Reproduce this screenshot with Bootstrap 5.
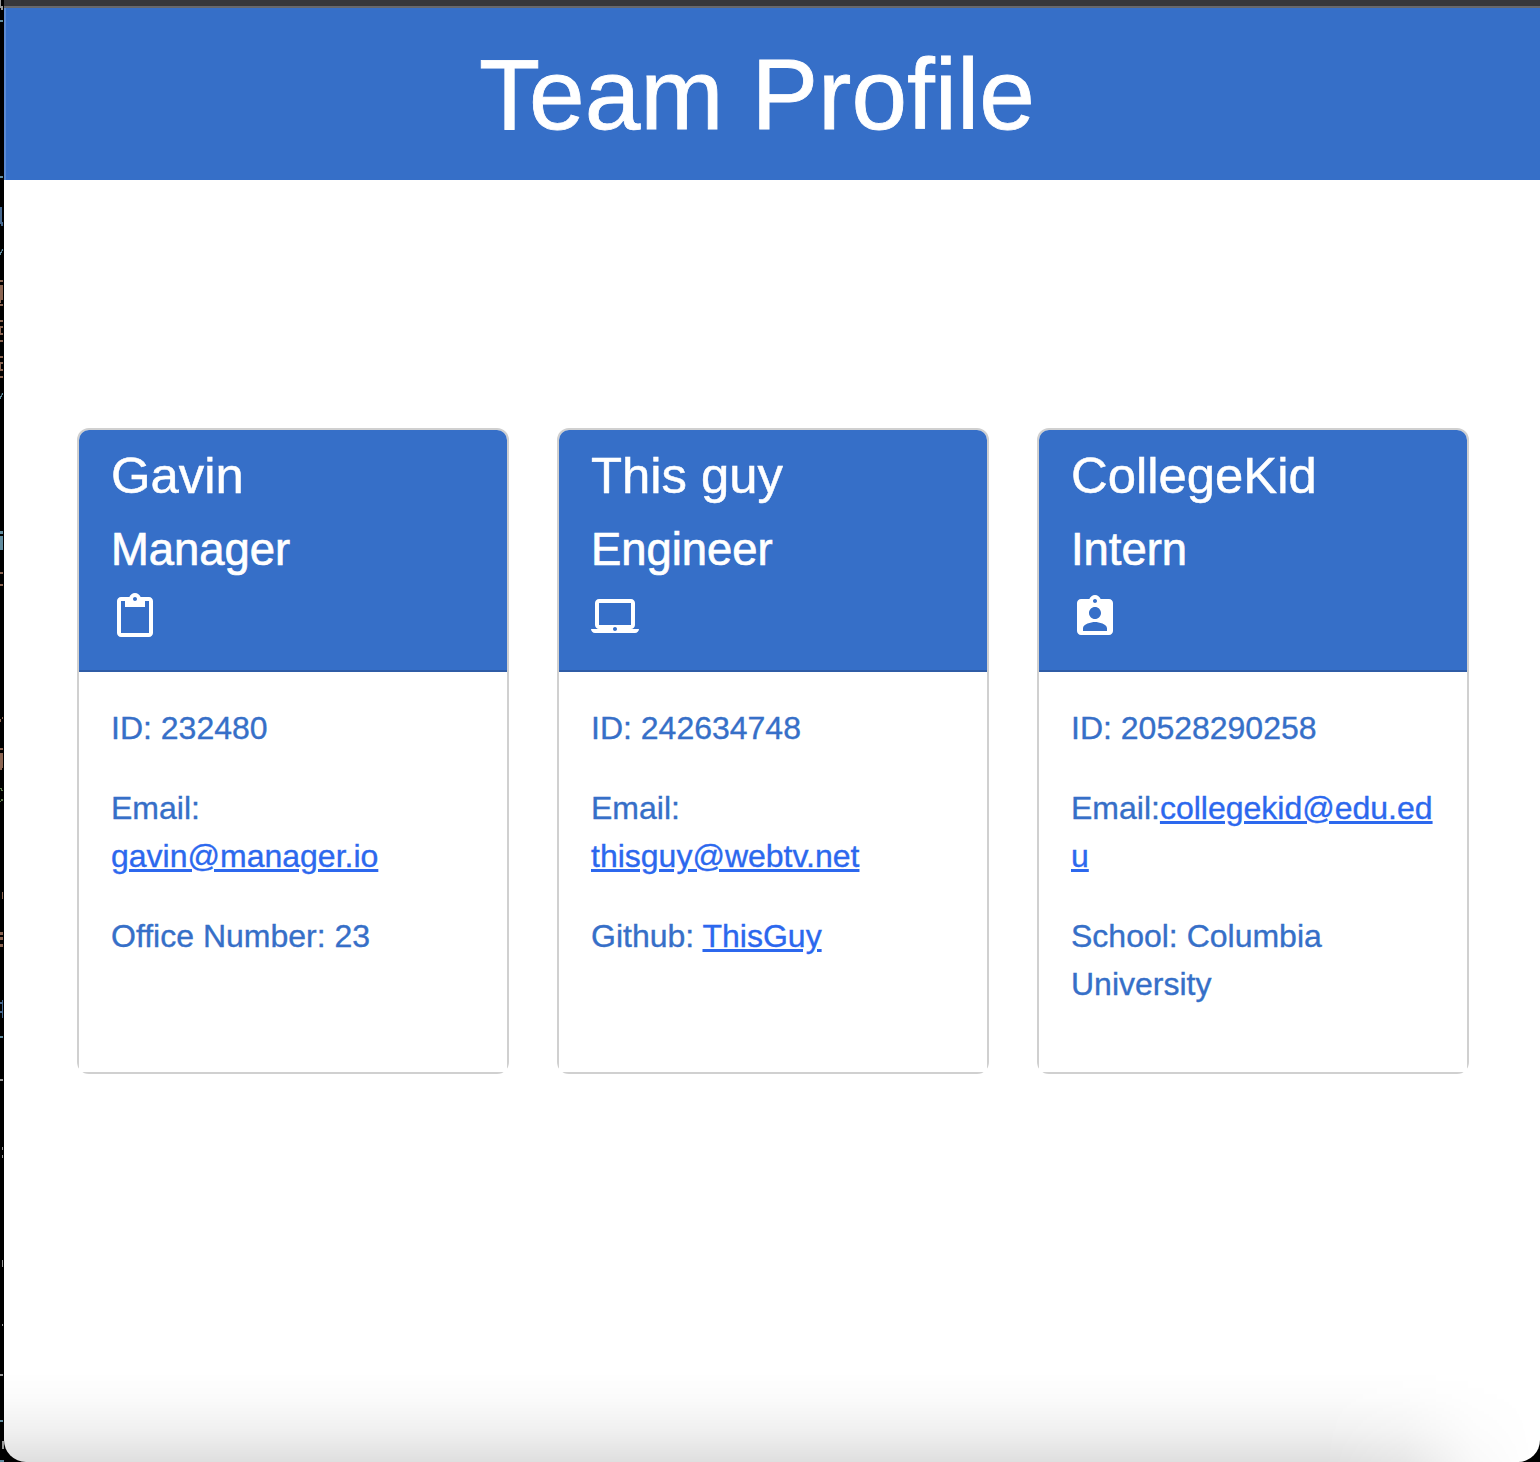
<!DOCTYPE html>
<html lang="en">
<head>
<meta charset="utf-8">
<meta name="viewport" content="width=device-width, initial-scale=1">
<title>Team Profile</title>
<link href="https://cdn.jsdelivr.net/npm/bootstrap@5.3.0/dist/css/bootstrap.min.css" rel="stylesheet">
<style>
  :root { --brand: #366fc8; }
  body { font-family: "Liberation Sans", Arial, sans-serif; font-size: 32px; background: #000; height: 1462px; overflow: hidden; -webkit-text-stroke: .35px currentColor; }
  .desktop { height: 1462px; }
  .editor-sliver { width: 4px; height: 1462px; flex: none; }
  .browser { border-radius: 0 0 22px 22px; overflow: hidden; background: #fff; }
  .toolbar-edge { height: 8px; background: #37373a; border-bottom: 2px solid #68686b; flex: none; }
  .hero { height: 172px; background: var(--brand); border-left: 2px solid #5b8ad3; color: #fff; padding-right: 32px; flex: none; }
  .hero h1 { font-size: 100px; line-height: 120px; margin: 0; padding-top: 26px; -webkit-text-stroke-width: .8px; }
  .team { padding: 248px 71px 0 73px; gap: 48px; }
  .profile { width: 432px; height: 646px; flex: none; border: 2px solid #d0d0d0; border-radius: 12px; color: var(--brand); }
  .profile .card-header { height: 242px; padding: 15px 32px 16px; background: var(--brand); color: #fff; border-bottom: 2px solid #2f5ca6; border-radius: 10px 10px 0 0; }
  .profile h2 { font-size: 50.8px; line-height: 61px; margin: 0 0 17px; -webkit-text-stroke-width: .5px; }
  .profile h3 { font-size: 45.4px; line-height: 54px; margin: 0 0 16px; -webkit-text-stroke-width: .7px; }
  .profile svg { width: 48px; height: 48px; fill: currentColor; display: block; }
  .profile .card-body { padding: 32px; background: #fff; }
  .profile p { line-height: 48px; margin-bottom: 32px; }
  .profile a { color: #2c68ee; }
  .dock-shade { height: 90px; background: linear-gradient(to bottom, rgba(0,0,0,0), rgba(0,0,0,.015) 28%, rgba(0,0,0,.06) 65%, rgba(0,0,0,.125)); -webkit-mask-image: linear-gradient(to right, #000 1320px, rgba(0,0,0,.75) 1400px, rgba(0,0,0,.2) 1470px, transparent 1530px); mask-image: linear-gradient(to right, #000 1320px, rgba(0,0,0,.75) 1400px, rgba(0,0,0,.2) 1470px, transparent 1530px); }
</style>
<script src="https://cdn.jsdelivr.net/npm/bootstrap@5.3.0/dist/js/bootstrap.bundle.min.js"></script>
</head>
<body>
<div class="desktop d-flex">
  <!-- edge of the code editor behind the browser window -->
  <svg class="editor-sliver" viewBox="0 0 4 1462" aria-hidden="true">
    <g fill="#999"><path d="M0 0h1v6h2v4H1V8H0z"/><path d="M0 1079h3v2H0zM2 1147h1v3H2zM2 1155h1v3H2zM2 1260h1v7H2zM2 1324h1v2H2zM0 1374h3v2H0zM2 1441h2v8H2z"/></g>
    <g fill="#628da0"><path d="M0 20h3v2H0zM0 176h3v2H0zM2 249h1v2H2v2H1v2H0v-3h1zM2 393h1v2H2v2H1v2H0v-3h1zM0 531h3v3H0zM0 536h3v14H0zM0 1036h3v2H0zM0 1420h3v2H0zM0 1460h4v2H0z"/></g>
    <g fill="#46688f"><path d="M0 207h2v15h1v4H1v-2H0zM2 1000h1v18H2v-5H0v-2h2v-7H0v-2h2z"/></g>
    <g fill="#8b6552"><path d="M0 280h3v2H0zM0 285h3v15H1v3H0zM0 304h3v2H0zM0 320h3v2H0zM0 326h3v2H1v5h2v2H0zM0 340h3v2H0zM0 356h3v2H0zM0 362h3v2H1v5h2v2H0zM0 376h3v2H0zM0 572h3v2H0zM0 584h3v2H0zM2 717h1v2H1v3H0v-3h2zM0 748h3v2H0zM0 753h3v15H2v2H0zM2 892h1v7H2zM0 932h3v3H0zM0 937h3v3H0zM0 944h3v3H0z"/></g>
    <path fill="#5e7a4c" d="M0 788h2v2h1v1H1v-2H0zM0 801h1v-2h2v2H1v1H0z"/>
  </svg>
  <div class="browser d-flex flex-column flex-grow-1">
    <div class="toolbar-edge"></div>
    <header class="hero text-center">
      <h1 class="fw-normal">Team Profile</h1>
    </header>
    <main class="team d-flex align-items-start">
      <article class="card profile">
        <div class="card-header">
          <h2 class="fw-normal">Gavin</h2>
          <h3 class="fw-normal">Manager</h3>
          <svg viewBox="0 0 24 24" aria-hidden="true"><path d="M19 2h-4.18C14.4.84 13.3 0 12 0c-1.3 0-2.4.84-2.82 2H5c-1.1 0-2 .9-2 2v16c0 1.1.9 2 2 2h14c1.1 0 2-.9 2-2V4c0-1.1-.9-2-2-2zm-7 0c.55 0 1 .45 1 1s-.45 1-1 1-1-.45-1-1 .45-1 1-1zm7 18H5V4h2v3h10V4h2v16z"/></svg>
        </div>
        <div class="card-body">
          <p>ID: 232480</p>
          <p>Email:<br><a href="mailto:gavin@manager.io">gavin@manager.io</a></p>
          <p>Office Number: 23</p>
        </div>
      </article>
      <article class="card profile">
        <div class="card-header">
          <h2 class="fw-normal">This guy</h2>
          <h3 class="fw-normal">Engineer</h3>
          <svg viewBox="0 0 24 24" aria-hidden="true"><path d="M20 18c1.1 0 1.99-.9 1.99-2L22 5c0-1.1-.9-2-2-2H4c-1.1 0-2 .9-2 2v11c0 1.1.9 2 2 2H0c0 1.1.9 2 2 2h20c1.1 0 2-.9 2-2h-4zM4 5h16v11H4V5zm8 14c-.55 0-1-.45-1-1s.45-1 1-1 1 .45 1 1-.45 1-1 1z"/></svg>
        </div>
        <div class="card-body">
          <p>ID: 242634748</p>
          <p>Email:<br><a href="mailto:thisguy@webtv.net">thisguy@webtv.net</a></p>
          <p>Github: <a href="#">ThisGuy</a></p>
        </div>
      </article>
      <article class="card profile">
        <div class="card-header">
          <h2 class="fw-normal">CollegeKid</h2>
          <h3 class="fw-normal">Intern</h3>
          <svg viewBox="0 0 24 24" aria-hidden="true"><path d="M19 3h-4.18C14.4 1.84 13.3 1 12 1c-1.3 0-2.4.84-2.82 2H5c-1.1 0-2 .9-2 2v14c0 1.1.9 2 2 2h14c1.1 0 2-.9 2-2V5c0-1.1-.9-2-2-2zm-7 0c.55 0 1 .45 1 1s-.45 1-1 1-1-.45-1-1 .45-1 1-1zm0 4c1.66 0 3 1.34 3 3s-1.34 3-3 3-3-1.34-3-3 1.34-3 3-3zm6 12H6v-1.4c0-2 4-3.1 6-3.1s6 1.1 6 3.1V19z"/></svg>
        </div>
        <div class="card-body">
          <p>ID: 20528290258</p>
          <p class="text-break">Email:<a href="mailto:collegekid@edu.edu">collegekid@edu.ed<wbr>u</a></p>
          <p>School: Columbia University</p>
        </div>
      </article>
    </main>
    <div class="dock-shade mt-auto"></div>
  </div>
</div>
</body>
</html>
